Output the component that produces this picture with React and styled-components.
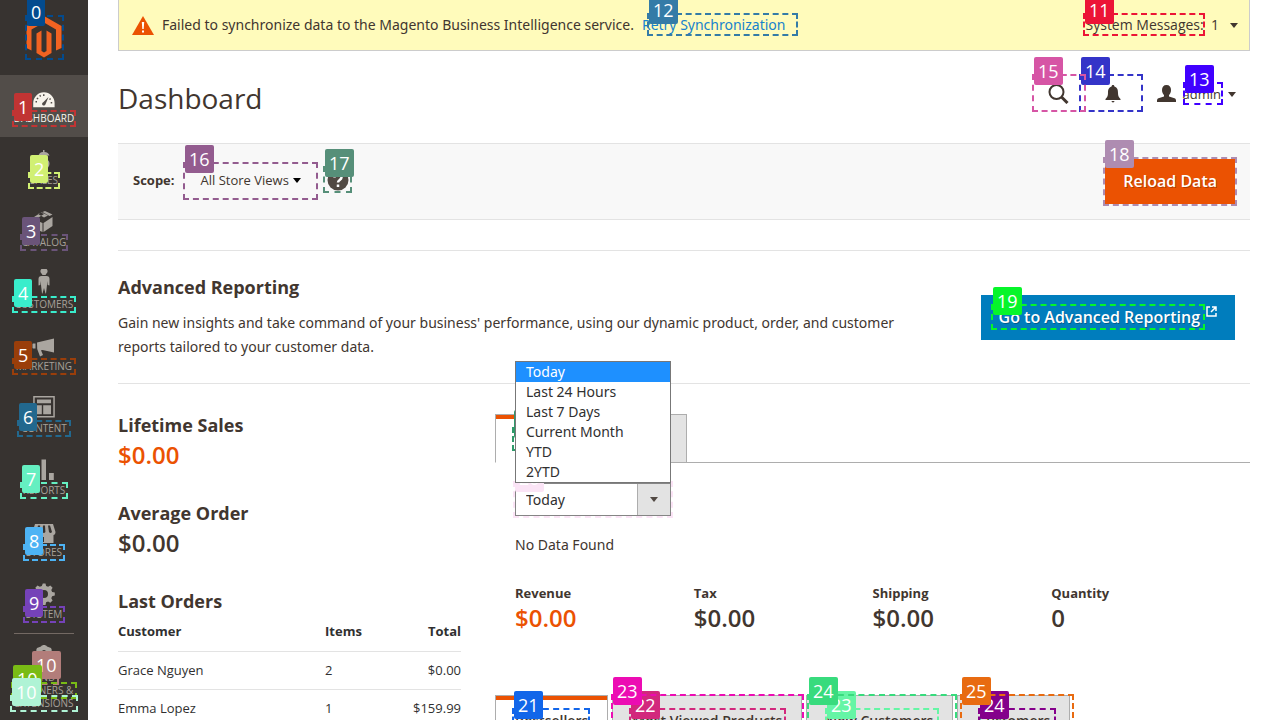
import React from "react";
import styled, { createGlobalStyle, css } from "styled-components";

const GlobalStyle = createGlobalStyle`
  * { box-sizing: border-box; }
  body { margin: 0; background: #fff; color: #41362f; font: 14px/20px "Noto Sans", "Open Sans", sans-serif; }
  h1, h2, p, ul, dl, dd { margin: 0; padding: 0; }
  button, select { font: inherit; color: inherit; }
`;

const Page = styled.div`
  position: relative;
  display: flex;
  height: 100vh;
  overflow: hidden;
`;

/* Sidebar */
const Sidebar = styled.nav`
  flex: 0 0 88px;
  background: #373330;
  font-family: "Open Sans", sans-serif;
`;
const LogoLink = styled.a`
  display: flex;
  justify-content: center;
  height: 75px;
  padding-top: 16px;
`;
const Menu = styled.ul`
  list-style: none;
`;
const MenuLink = styled.a`
  display: flex;
  flex-direction: column;
  align-items: center;
  min-height: 62px;
  padding-top: 8px;
  font-size: 10px;
  line-height: 13px;
  text-align: center;
  text-transform: uppercase;
  text-decoration: none;
  color: ${(p) => (p.$active ? "#f7f3eb" : "#a6a098")};
  background: ${(p) => (p.$active ? "#524d49" : "transparent")};
  svg { flex: none; margin-bottom: 1px; fill: ${(p) => (p.$active ? "#f7f3eb" : "#aaa6a0")}; }
`;
const MenuEnd = styled.li`
  margin-top: -1px;
  &::before {
    content: "";
    display: block;
    height: 1px;
    margin: 1px 14px 0;
    background: #736963;
  }
`;

/* Main column */
const Main = styled.main`
  flex: 1;
  min-width: 0;
  padding: 0 30px;
`;
const Notice = styled.section`
  display: flex;
  align-items: center;
  justify-content: space-between;
  height: 51px;
  padding: 0 11px 0 13px;
  background: #fffbbb;
  border: 1px solid #ccc;
  border-top: 0;
  color: #41362f;
`;
const NoticeText = styled.p`
  display: flex;
  align-items: center;
  gap: 8px;
`;
const TextLink = styled.a`
  color: #1782cc;
  text-decoration: none;
`;
const PlainButton = styled.button`
  display: flex;
  align-items: center;
  gap: ${(p) => p.$gap || 0}px;
  padding: 0;
  border: 0;
  background: none;
  font-family: "Open Sans", sans-serif;
  font-size: ${(p) => p.$size || 14}px;
`;
const PageHeader = styled.header`
  display: flex;
  align-items: center;
  justify-content: space-between;
  height: 92px;
  padding: 0 14px 0 0;
`;
const Title = styled.h1`
  padding-top: 2px;
  font-family: "Open Sans", sans-serif;
  font-size: 28px;
  line-height: 36px;
  font-weight: 400;
`;
const HeaderTools = styled.div`
  display: flex;
  align-items: center;
  gap: 36px;
  padding-bottom: 6px;
`;
const ScopeBar = styled.section`
  display: flex;
  align-items: center;
  justify-content: space-between;
  height: 77px;
  padding: 0 15px;
  background: #f8f8f8;
  border: solid #e3e3e3;
  border-width: 1px 0;
`;
const ScopeGroup = styled.div`
  display: flex;
  align-items: center;
  gap: 26px;
  padding-bottom: 3px;
  font: 13px/20px "Open Sans", sans-serif;
  b { font-weight: 700; }
`;
const actionStyle = css`
  height: 45px;
  padding: 0 18px 2px;
  border: 0;
  color: #fff;
  font-family: "Open Sans", sans-serif;
  font-size: 16px;
  font-weight: 600;
  text-decoration: none;
  text-shadow: 1px 1px 0 rgba(0, 0, 0, 0.25);
`;
const ActionButton = styled.button`
  ${actionStyle}
  background: #eb5202;
`;
const ActionLink = styled.a`
  ${actionStyle}
  display: flex;
  align-items: center;
  gap: 6px;
  background: #007dbd;
  svg { margin-bottom: 10px; }
`;
const Reporting = styled.section`
  display: flex;
  justify-content: space-between;
  align-items: flex-start;
  height: 134px;
  margin-top: 30px;
  padding: 24px 15px 0 0;
  border: solid #e3e3e3;
  border-width: 1px 0;
  div { flex: 0 1 820px; }
  p { margin-top: 12px; line-height: 24px; }
  ${ActionLink} { margin-top: 20px; }
`;
const Heading = styled.h2`
  font-family: "Open Sans", sans-serif;
  font-size: 18px;
  line-height: 24px;
  font-weight: 700;
`;
const Columns = styled.div`
  display: grid;
  grid-template-columns: 343fr 755fr;
  gap: 34px;
  padding-top: 30px;
`;
const Overview = styled.div`
  margin-top: -1px;
`;
const Summary = styled.section`
  height: 88px;
`;
const Amount = styled.p`
  font-family: "Open Sans", sans-serif;
  font-size: 24px;
  line-height: 35px;
  font-weight: 600;
  color: ${(p) => (p.$accent ? "#eb5202" : "#41362f")};
`;
const OrdersTable = styled.table`
  width: 100%;
  margin-top: -2px;
  border-collapse: collapse;
  color: #303030;
  font: 13px/20px "Open Sans", sans-serif;
  th, td { height: 38px; padding: 0; text-align: left; border-top: 1px solid #e3e3e3; }
  th { height: 40px; font-weight: 700; border-top: 0; }
  th:nth-child(2), td:nth-child(2) { width: 66px; }
  th:last-child, td:last-child { width: 70px; text-align: right; }
`;
const Tabs = styled.div`
  display: flex;
  gap: 4px;
  height: 49px;
  border-bottom: 1px solid #adadad;
`;
const Tab = styled.button`
  height: 49px;
  padding: 2px 19px 0;
  border: 1px solid #adadad;
  background: #e3e3e3;
  font-family: "Open Sans", sans-serif;
  font-weight: 600;
  ${(p) => p.$active && css`
    background: #fff;
    border-bottom-color: #fff;
    box-shadow: inset 0 4px #eb5202;
  `}
`;
const TabPanel = styled.div`
  padding: 20px;
`;
const Period = styled.div`
  position: relative;
  width: 156px;
  height: 33px;
  svg { position: absolute; right: 13px; top: 14px; pointer-events: none; }
`;
const PeriodSelect = styled.select`
  width: 100%;
  height: 100%;
  padding: 0 10px;
  appearance: none;
  border: 1px solid #858585;
  border-radius: 0;
  color: #303030;
  background: linear-gradient(to right, #adadad 1px, #e3e3e3 1px) right / 33px 100% no-repeat #fff;
`;
const Options = styled.ul`
  position: absolute;
  z-index: 2;
  left: 0;
  bottom: 33px;
  width: 100%;
  list-style: none;
  border: 1px solid #777;
  background: #fff;
  color: #303030;
  li { padding: 0 10px; }
  li[aria-selected="true"] { background: #1e90ff; color: #fff; }
`;
const Empty = styled.p`
  margin-top: 19px;
`;
const Totals = styled.dl`
  display: grid;
  grid-template-columns: repeat(4, 1fr);
  margin: 28px 0 42px;
  font-family: "Open Sans", sans-serif;
  dt { font-size: 13px; font-weight: 700; }
  dd { font-size: 24px; line-height: 30px; font-weight: 600; }
  div:first-child dd { color: #eb5202; }
`;

/* Numbered marks that lie over the page */
const Mark = styled.div`
  position: absolute;
  z-index: 1;
  top: ${(p) => p.$y}px;
  ${(p) => (p.$fromRight ? `right: ${p.$fromRight}px` : `left: ${p.$x}px`)};
  width: ${(p) => p.$w}px;
  height: ${(p) => p.$h}px;
  border: 2px dashed ${(p) => p.$color};
  pointer-events: none;
`;
const Badge = styled.span`
  position: absolute;
  top: -19px;
  left: 0;
  padding: 0 4px;
  border-radius: 2px;
  background: ${(p) => p.$color};
  color: #fff;
  font: 18px/28px "Open Sans", sans-serif;
`;

const marks = [
  { n: 0, x: 25, y: 15, w: 39, h: 45, c: "#034b8e" },
  { n: 1, x: 12, y: 110, w: 64, h: 17, c: "#c13433" },
  { n: 2, x: 28, y: 172, w: 32, h: 17, c: "#d1f073" },
  { n: 3, x: 20, y: 234, w: 48, h: 17, c: "#6a5479" },
  { n: 4, x: 12, y: 296, w: 64, h: 17, c: "#39edcb" },
  { n: 5, x: 12, y: 358, w: 64, h: 17, c: "#9a3e0a" },
  { n: 6, x: 17, y: 420, w: 54, h: 17, c: "#22688e" },
  { n: 7, x: 20, y: 482, w: 48, h: 17, c: "#65efc1" },
  { n: 8, x: 23, y: 544, w: 42, h: 17, c: "#4db3f4" },
  { n: 9, x: 23, y: 606, w: 42, h: 17, c: "#7542b8" },
  { n: 10, x: 30, y: 668, w: 29, h: 17, c: "#b27d7a" },
  { n: 10, x: 11, y: 682, w: 66, h: 17, c: "#79bb15" },
  { n: 10, x: 10, y: 695, w: 68, h: 17, c: "#aff3d5" },
  { n: 11, r: 75, y: 13, w: 122, h: 23, c: "#ec1436" },
  { n: 12, x: 647, y: 13, w: 151, h: 23, c: "#347ba7" },
  { n: 13, r: 57, y: 82, w: 40, h: 23, c: "#4000ff" },
  { n: 14, r: 137, y: 74, w: 64, h: 38, c: "#3434c8" },
  { n: 15, r: 194, y: 74, w: 54, h: 38, c: "#d655a5" },
  { n: 16, x: 183, y: 162, w: 135, h: 38, c: "#935c8f" },
  { n: 17, x: 323, y: 166, w: 29, h: 27, c: "#568f79" },
  { n: 18, r: 43, y: 157, w: 134, h: 49, c: "#ae8cb1" },
  { n: 19, r: 75, y: 304, w: 214, h: 26, c: "#06f52a" },
  { n: 20, x: 512, y: 427, w: 49, h: 24, c: "#2f9a6a" },
  { n: 20, x: 513, y: 481, w: 160, h: 37, c: "#fbe4f6" },
  { n: 21, x: 512, y: 708, w: 78, h: 23, c: "#1266e9" },
  { n: 22, x: 629, y: 708, w: 157, h: 23, c: "#d2287d" },
  { n: 23, x: 825, y: 708, w: 114, h: 23, c: "#65f5a5" },
  { n: 24, x: 978, y: 708, w: 78, h: 23, c: "#84008b" },
  { n: 23, x: 611, y: 694, w: 193, h: 51, c: "#ec0cb3" },
  { n: 24, x: 807, y: 694, w: 150, h: 51, c: "#38db7d" },
  { n: 25, x: 960, y: 694, w: 114, h: 51, c: "#e86b11" },
];

const Caret = ({ color = "#41362f" }) => (
  <svg width="8" height="5" viewBox="0 0 8 5" aria-hidden="true"><path d="M0 0h8L4 5z" fill={color} /></svg>
);

const menu = [
  ["Dashboard", <path d="M5.200 25.300V21A10.700 10.700 0 0 1 26.600 21V25.300zM14.500 23c1 1 2.500.5 3-.8L20.500 15l-5 5c-1.500 1.200-1.800 2-1 3zM7.500 20.500H9V19H7.500zM8.500 16.700l1.400.7.6-1.200-1.400-.8zM11.200 13.700l1 1.200 1-.9-1-1.200zM15 12.300v1.600h1.500v-1.600zM22.300 16l-1.300.9.800 1.200 1.300-.9zM22.700 20v1.500h1.500V20z" fillRule="evenodd" />],
  ["Sales", <path d="M15 6h1.500v2c2.500.2 4.500 1.500 5 3.500h-11c.5-2 2-3.300 4.500-3.500zM10 12.500h10v1l-5 .500c5 1 6.500 3 6.500 5.500 0 3-2 5.500-5 6v2h-2v-2c-2.500-.2-4.500-1-5.500-2l1-2.300 4.500 1.300v-4c-4-.8-4.500-3-4.500-6z" />],
  ["Catalog", <path d="m6 11 7-4.500 3 1.500-7 4.500zM14.500 6l2.500-1L24.500 8.500 21.500 10zM16 11.500l4-2-6.500-3.200-3.500 1.700zM5 13l9.500 4v9L5 22zM15.500 17l9-6v9l-9 6z" />],
  ["Customers", <path transform="translate(0 -5)" d="M13.500 10.500a3.400 3.400 0 1 1 5 0L17.500 12h-3zM13.500 13h5c2 0 3 1.200 3 3v6.500l-1.800-.5-.2-4-.5 4L18 30.500h-.5L16 25l-1.500 5.500H14L13 22l-.5-4-.2 4-1.800.5V16c0-1.800 1-3 3-3z" />],
  ["Marketing", <path d="M5 13.500h2.500v5H5l-.5-.5v-4zM9 12.500 26 8.500v14l-11.500-2.500-1.500.3 2 4.700-3 1.500L9.200 19z" />],
  ["Content", <path transform="translate(0 -1)" d="M5.200 5h21.600v21.600H5.200zM6.700 6.500v18.600h18.600V6.500zM9 8.500h14v3.800H9zM9 14.200h4.800v9H9zM15.200 14.200H23v9h-7.800z" fillRule="evenodd" />],
  ["Reports", <path d="M6 12h4.800v14H6zM13.500 5.500h4.500v20.500h-4.500zM21 19h4.800v7H21z" />],
  ["Stores", <path transform="translate(0 2)" d="M7 6h18l2.500 8c0 2-1 2.800-2 3V25H7v-9c-1.500 0-2.500-.5-2.500-2zM10 7.500 8.500 14c1 1.300 2 1.300 3 0l.7-6.500zm5 0-.6 6.500c1 1.300 2 1.300 3 0l-.4-6.500zm5 0 1 6.500c1 1.300 2 1.300 3 0l-2-6.500zM9 19v5h7v-5z" fillRule="evenodd" />],
  ["System", <path d="m14.800 5.500 2.700 0 .6 2.500 2 .8 2.200-1.300 2.300 2.200-1.300 2.300.8 2 2.700.6v3l-2.700.7-.8 2 1.300 2.300-2.300 2.200-2.200-1.300-2 .8-.6 2.700h-3l-.7-2.700-2-.8-2.300 1.300-2.200-2.200 1.300-2.300-.8-2-2.500-.7v-3l2.500-.6.8-2L7.300 9.700l2.200-2.200 2.300 1.300 2-.8zM16 12a4 4 0 1 0 0 8 4 4 0 0 0 0-8z" fillRule="evenodd" />],
];

const MenuIcon = ({ children }) => (
  <svg width="32" height="28" viewBox="0 0 32 30" preserveAspectRatio="xMidYMid slice" aria-hidden="true">{children}</svg>
);

const periods = ["Today", "Last 24 Hours", "Last 7 Days", "Current Month", "YTD", "2YTD"];
const totals = [["Revenue", "$0.00"], ["Tax", "$0.00"], ["Shipping", "$0.00"], ["Quantity", "0"]];
const orders = [["Grace Nguyen", 2, "$0.00"], ["Emma Lopez", 1, "$159.99"]];

export default function App() {
  return (
    <Page>
      <GlobalStyle />
      <Sidebar aria-label="Main menu">
        <LogoLink href="#" aria-label="Magento">
          <svg width="36" height="42" viewBox="0 0 36 42" fill="#f26322" aria-hidden="true">
            <path d="M18 0 35.500 10v22L30 34.500V13.500L18 6.500 5.500 13.500v21L.500 32V10z" />
            <path d="M10.500 17.500 15.500 14.500V35L18 36.500 20.500 35V14.500L25.500 17.500V37L18 41.500 10.500 37z" />
          </svg>
        </LogoLink>
        <Menu>
          {menu.map(([label, icon], i) => (
            <li key={label}>
              <MenuLink href="#" $active={i === 0}><MenuIcon>{icon}</MenuIcon>{label}</MenuLink>
            </li>
          ))}
          <MenuEnd>
            <MenuLink href="#">
              <MenuIcon>
                <path d="M13 5.500c1-2 5-2 6 0l4 1.500 1 2.500-3.500 1.500-4.500-2-4.500 2L8 9.500 9 7zM7 12l9-2 9 2v10l-9 5-9-5z" />
              </MenuIcon>
              Find<br />Partners &amp;<br />Extensions
            </MenuLink>
          </MenuEnd>
        </Menu>
      </Sidebar>

      <Main>
        <Notice>
          <NoticeText>
            <svg width="22" height="19" viewBox="0 0 22 19" aria-hidden="true">
              <path d="M11 0 22 19H0z" fill="#eb5202" />
              <path d="M9.800 6h2.400l-.5 7h-1.400zM10 14.500h2v2h-2z" fill="#fff" />
            </svg>
            Failed to synchronize data to the Magento Business Intelligence service.
            <TextLink href="#">Retry Synchronization</TextLink>
          </NoticeText>
          <PlainButton $gap={11}>System Messages:&nbsp; 1 <Caret /></PlainButton>
        </Notice>

        <PageHeader>
          <Title>Dashboard</Title>
          <HeaderTools>
            <PlainButton aria-label="Search">
              <svg width="21" height="20" viewBox="0 0 21 20" fill="none" stroke="#41362f" aria-hidden="true">
                <circle cx="8.500" cy="8" r="7" strokeWidth="2" /><path d="m13.500 13 6 6" strokeWidth="3" />
              </svg>
            </PlainButton>
            <PlainButton aria-label="Notifications">
              <svg width="16" height="18" viewBox="0 0 16 18" fill="#41362f" aria-hidden="true">
                <path d="M8 0c1 0 1.400.7 1.400 1.600C12.500 2.500 13 5 13 8c0 3 .8 4.500 2.500 6v1H.5v-1C2.200 12.500 3 11 3 8c0-3 .5-5.500 3.600-6.400C6.600.7 7 0 8 0zM6.200 16h3.600L8 17.800z" />
              </svg>
            </PlainButton>
            <PlainButton $gap={7} $size={13}>
              <svg width="19" height="18" viewBox="0 0 19 18" fill="#41362f" aria-hidden="true">
                <path d="M9.500 0C12.500 0 14 2 14 5c0 2.500-1 4-2 5v1.500l5.500 1.700c1 .4 1.500 1.200 1.500 2.300V17H0v-1.500c0-1.100.5-1.900 1.500-2.300L7 11.500V10C6 9 5 7.500 5 5c0-3 1.500-5 4.500-5z" />
              </svg>
              admin
              <Caret />
            </PlainButton>
          </HeaderTools>
        </PageHeader>

        <ScopeBar>
          <ScopeGroup>
            <b>Scope:</b>
            <PlainButton $gap={4} $size={13}>All Store Views <Caret color="#000" /></PlainButton>
            <PlainButton aria-label="Help">
              <svg width="22" height="22" viewBox="0 0 22 22" aria-hidden="true">
                <circle cx="11" cy="11" r="10.500" fill="#514943" />
                <path d="M7.500 8.500c0-5 7.500-4.500 7 0-.3 2.500-3.500 2.500-3.500 5M11 15.500v2.500" fill="none" stroke="#fff" strokeWidth="2.500" />
              </svg>
            </PlainButton>
          </ScopeGroup>
          <ActionButton>Reload Data</ActionButton>
        </ScopeBar>

        <Reporting>
          <div>
            <Heading>Advanced Reporting</Heading>
            <p>Gain new insights and take command of your business' performance, using our dynamic product, order, and customer reports tailored to your customer data.</p>
          </div>
          <ActionLink href="#">
            Go to Advanced Reporting
            <svg width="11" height="11" viewBox="0 0 11 11" fill="none" stroke="#fff" aria-hidden="true">
              <path d="M4 1H1v9h9V7M6 1h4v4M10 1 5 6" strokeWidth="1.500" />
            </svg>
          </ActionLink>
        </Reporting>

        <Columns>
          <Overview>
            <Summary><Heading>Lifetime Sales</Heading><Amount $accent>$0.00</Amount></Summary>
            <Summary><Heading>Average Order</Heading><Amount>$0.00</Amount></Summary>
            <Heading>Last Orders</Heading>
            <OrdersTable>
              <thead><tr><th>Customer</th><th>Items</th><th>Total</th></tr></thead>
              <tbody>
                {orders.map((row) => (
                  <tr key={row[0]}>{row.map((cell, i) => <td key={i}>{cell}</td>)}</tr>
                ))}
              </tbody>
            </OrdersTable>
          </Overview>
          <div>
            <Tabs role="tablist">
              <Tab role="tab" aria-selected="true" $active>Orders</Tab>
              <Tab role="tab">Amounts</Tab>
            </Tabs>
            <TabPanel role="tabpanel">
              <Period>
                <PeriodSelect aria-label="Period" defaultValue="Today">
                  {periods.map((p) => <option key={p}>{p}</option>)}
                </PeriodSelect>
                <Caret color="#514943" />
                <Options role="listbox" aria-label="Period options">
                  {periods.map((p, i) => <li key={p} role="option" aria-selected={i === 0}>{p}</li>)}
                </Options>
              </Period>
              <Empty>No Data Found</Empty>
              <Totals>
                {totals.map(([name, value]) => <div key={name}><dt>{name}</dt><dd>{value}</dd></div>)}
              </Totals>
            </TabPanel>
            <Tabs role="tablist">
              <Tab role="tab" aria-selected="true" $active>Bestsellers</Tab>
              <Tab role="tab">Most Viewed Products</Tab>
              <Tab role="tab">New Customers</Tab>
              <Tab role="tab">Customers</Tab>
            </Tabs>
          </div>
        </Columns>
      </Main>

      {marks.map((m, i) => (
        <Mark key={i} $x={m.x} $fromRight={m.r} $y={m.y} $w={m.w} $h={m.h} $color={m.c}>
          <Badge $color={m.c}>{m.n}</Badge>
        </Mark>
      ))}
    </Page>
  );
}
